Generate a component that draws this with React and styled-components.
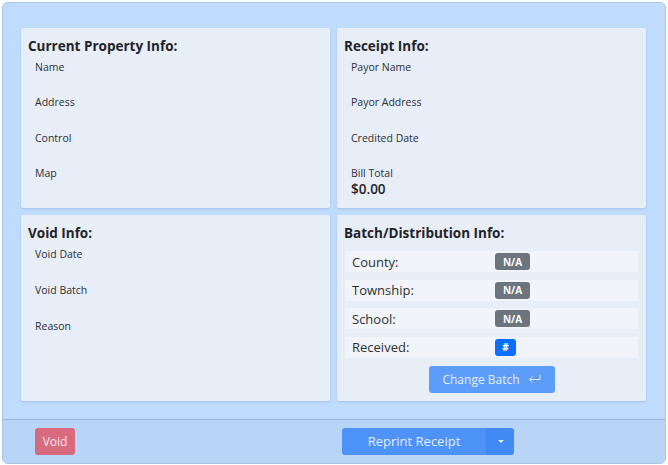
import React from 'react'
import styled, { createGlobalStyle } from 'styled-components'

const Global = createGlobalStyle`
  body {
    margin: 0;
    background: #ffffff;
    font-family: "Open Sans", "Noto Sans", sans-serif;
  }
`

const Frame = styled.div`
  margin: 2px;
  width: 662px;
  height: 460px;
  border: 1px solid #a9c5e6;
  border-radius: 6px;
  background: #bfdbfd;
  overflow: hidden;
  display: flex;
  flex-direction: column;
`

const Body = styled.div`
  flex: 1;
  padding: 25px 18px 17px 18px;
  display: grid;
  grid-template-columns: 309px 309px;
  grid-template-rows: 180px 186px;
  gap: 7px;
`

const Card = styled.section`
  background: #e8eef8;
  border-radius: 2px;
  box-shadow: 0 1px 2px rgba(80, 120, 170, 0.25);
  padding: 9px 7px 7px 7px;
  display: flex;
  flex-direction: column;
`

const Title = styled.h3`
  margin: 0 0 5px 0;
  font-size: 13.5px;
  line-height: 18px;
  font-weight: 700;
  color: #1f2328;
`

const Field = styled.div`
  padding-left: 7px;
  height: 36px;
`

const Label = styled.div`
  font-size: 10.5px;
  line-height: 14px;
  color: #2b2f33;
`

const Value = styled.div`
  margin-top: 1px;
  font-size: 13.5px;
  line-height: 17px;
  font-weight: 600;
  color: #1f2328;
`

const BatchList = styled.div`
  display: flex;
  flex-direction: column;
  gap: 7.5px;
  padding: 0 1px;
  margin-top: 4px;
`

const BatchRow = styled.div`
  display: grid;
  grid-template-columns: 143px auto;
  align-items: center;
  height: 21px;
  padding-left: 7px;
  background: #f1f4f8;
  font-size: 13px;
  color: #2b2f33;
`

const Badge = styled.span`
  justify-self: start;
  display: inline-flex;
  align-items: center;
  justify-content: center;
  height: 17px;
  min-width: ${p => (p.$blue ? '21px' : '35px')};
  padding: 0 4px;
  box-sizing: border-box;
  border-radius: 3px;
  background: ${p => (p.$blue ? '#0d6efd' : '#6c757d')};
  color: #ffffff;
  font-size: 10px;
  font-weight: 700;
`

const ChangeButton = styled.button`
  align-self: center;
  margin-top: 8px;
  width: 126px;
  height: 27px;
  border: none;
  border-radius: 3px;
  background: #5b9df8;
  color: #e4eeff;
  font-family: inherit;
  font-size: 12px;
  display: flex;
  align-items: center;
  justify-content: center;
  gap: 8px;
`

const Footer = styled.div`
  height: 43px;
  border-top: 1px solid #9ab8db;
  background: #b8d4f7;
  display: grid;
  grid-template-columns: 309px 309px;
  gap: 7px;
  padding: 0 18px;
  align-items: center;
`

const FooterCell = styled.div`
  display: flex;
  padding-left: ${p => p.$pad};
`

const VoidButton = styled.button`
  height: 27px;
  width: 40px;
  border: none;
  border-radius: 3px;
  background: #d86a7e;
  color: #fbe9ec;
  font-family: inherit;
  font-size: 12px;
  padding: 0;
`

const SplitGroup = styled.div`
  display: flex;
  height: 27px;
  border-radius: 3px;
  overflow: hidden;
`

const MainButton = styled.button`
  width: 144px;
  border: none;
  background: #4d93f7;
  color: #e4eeff;
  font-family: inherit;
  font-size: 13px;
  padding: 0 0 2px 0;
`

const CaretButton = styled.button`
  width: 28px;
  border: none;
  border-left: 1px solid #3f86ee;
  background: #4189f3;
  display: flex;
  align-items: center;
  justify-content: center;
  padding: 0;
`

const Caret = styled.span`
  width: 0;
  height: 0;
  border-left: 3px solid transparent;
  border-right: 3px solid transparent;
  border-top: 3px solid #e4eeff;
`

const propertyFields = ['Name', 'Address', 'Control', 'Map']
const voidFields = ['Void Date', 'Void Batch', 'Reason']
const batchRows = [
  { label: 'County:', value: 'N/A' },
  { label: 'Township:', value: 'N/A' },
  { label: 'School:', value: 'N/A' },
  { label: 'Received:', value: '#', blue: true },
]

const App = () => {
  return (
    <>
      <Global />
      <Frame>
        <Body>
          <Card>
            <Title>Current Property Info:</Title>
            {propertyFields.map(f => (
              <Field key={f}><Label>{f}</Label></Field>
            ))}
          </Card>
          <Card>
            <Title>Receipt Info:</Title>
            <Field><Label>Payor Name</Label></Field>
            <Field><Label>Payor Address</Label></Field>
            <Field><Label>Credited Date</Label></Field>
            <Field>
              <Label>Bill Total</Label>
              <Value>$0.00</Value>
            </Field>
          </Card>
          <Card>
            <Title>Void Info:</Title>
            {voidFields.map(f => (
              <Field key={f}><Label>{f}</Label></Field>
            ))}
          </Card>
          <Card>
            <Title>Batch/Distribution Info:</Title>
            <BatchList>
              {batchRows.map(r => (
                <BatchRow key={r.label}>
                  <span>{r.label}</span>
                  <Badge $blue={r.blue}>{r.value}</Badge>
                </BatchRow>
              ))}
            </BatchList>
            <ChangeButton>
              Change Batch
              <svg width="13" height="10" viewBox="0 0 13 10" fill="none" stroke="#dbe8ff" strokeWidth="1">
                <path d="M12 0.5 V5.5 H1.5" />
                <path d="M4.5 2.5 L1.5 5.5 L4.5 8.5" />
              </svg>
            </ChangeButton>
          </Card>
        </Body>
        <Footer>
          <FooterCell $pad="14px">
            <VoidButton>Void</VoidButton>
          </FooterCell>
          <FooterCell $pad="5px">
            <SplitGroup>
              <MainButton>Reprint Receipt</MainButton>
              <CaretButton><Caret /></CaretButton>
            </SplitGroup>
          </FooterCell>
        </Footer>
      </Frame>
    </>
  )
}

export default App
